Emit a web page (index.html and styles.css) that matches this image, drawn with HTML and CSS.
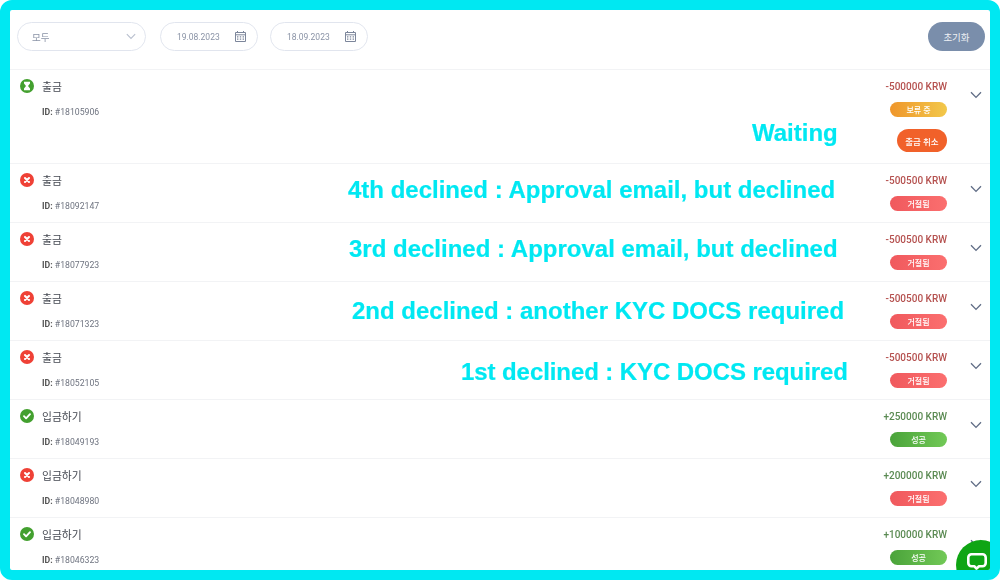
FILE: index.html
```html
<!DOCTYPE html>
<html lang="ko">
<head>
<meta charset="utf-8">
<title>거래 내역</title>
<link rel="stylesheet" href="styles.css">
</head>
<body>
<svg class="sprites" width="0" height="0" aria-hidden="true">
  <symbol id="i-chev" viewBox="0 0 12 8"><path d="M1 1.2 6 6.4l5-5.2" fill="none" stroke="currentColor" stroke-width="1.3"/></symbol>
  <symbol id="i-cal" viewBox="0 0 11 11"><path d="M2.5 0v2M8.5 0v2" stroke="currentColor" fill="none"/><path d="M.5 1.5h10v9H.5zM.5 3.8h10" stroke="currentColor" fill="none"/><path d="M2 5.2h1.4v1.2H2zM4.8 5.2h1.4v1.2H4.8zM7.6 5.2H9v1.2H7.6zM2 7.6h1.4v1.2H2zM4.8 7.6h1.4v1.2H4.8zM7.6 7.6H9v1.2H7.6z" fill="currentColor"/></symbol>
  <symbol id="i-x" viewBox="0 0 14 14"><circle cx="7" cy="7" r="7" fill="#ef4136"/><path d="M5 5l4 4M9 5l-4 4" stroke="#fff" stroke-width="2.1" stroke-linecap="round"/></symbol>
  <symbol id="i-ok" viewBox="0 0 14 14"><circle cx="7" cy="7" r="7" fill="#43a02f"/><path d="M4 7.2l2.1 2.1L10 5.2" fill="none" stroke="#fff" stroke-width="1.9" stroke-linecap="round" stroke-linejoin="round"/></symbol>
  <symbol id="i-wait" viewBox="0 0 14 14"><circle cx="7" cy="7" r="7" fill="#43a02f"/><path d="M4 2.8h6v1.7L8 7l2 2.5v1.7H4V9.5L6 7 4 4.5z" fill="#fff"/></symbol>
</svg>
<main class="frame">
  <div class="toolbar">
    <div class="field field-select"><span>모두</span><svg class="field-chev"><use href="#i-chev"/></svg></div>
    <div class="field field-date"><span>19.08.2023</span><svg class="cal"><use href="#i-cal"/></svg></div>
    <div class="field field-date"><span>18.09.2023</span><svg class="cal"><use href="#i-cal"/></svg></div>
    <button class="reset">초기화</button>
  </div>

  <ul class="list">
    <li class="row">
      <div class="info">
        <div class="title"><svg class="status"><use href="#i-wait"/></svg>출금</div>
        <div class="id"><b>ID:</b> #18105906</div>
      </div>
      <div class="money">
        <div class="amount minus">-500000 KRW</div>
        <div class="badge pending">보류 중</div>
        <button class="cancel">출금 취소</button>
      </div>
      <svg class="chev"><use href="#i-chev"/></svg>
    </li>
    <li class="row">
      <div class="info">
        <div class="title"><svg class="status"><use href="#i-x"/></svg>출금</div>
        <div class="id"><b>ID:</b> #18092147</div>
      </div>
      <div class="money">
        <div class="amount minus">-500500 KRW</div>
        <div class="badge declined">거절됨</div>
      </div>
      <svg class="chev"><use href="#i-chev"/></svg>
    </li>
    <li class="row">
      <div class="info">
        <div class="title"><svg class="status"><use href="#i-x"/></svg>출금</div>
        <div class="id"><b>ID:</b> #18077923</div>
      </div>
      <div class="money">
        <div class="amount minus">-500500 KRW</div>
        <div class="badge declined">거절됨</div>
      </div>
      <svg class="chev"><use href="#i-chev"/></svg>
    </li>
    <li class="row">
      <div class="info">
        <div class="title"><svg class="status"><use href="#i-x"/></svg>출금</div>
        <div class="id"><b>ID:</b> #18071323</div>
      </div>
      <div class="money">
        <div class="amount minus">-500500 KRW</div>
        <div class="badge declined">거절됨</div>
      </div>
      <svg class="chev"><use href="#i-chev"/></svg>
    </li>
    <li class="row">
      <div class="info">
        <div class="title"><svg class="status"><use href="#i-x"/></svg>출금</div>
        <div class="id"><b>ID:</b> #18052105</div>
      </div>
      <div class="money">
        <div class="amount minus">-500500 KRW</div>
        <div class="badge declined">거절됨</div>
      </div>
      <svg class="chev"><use href="#i-chev"/></svg>
    </li>
    <li class="row">
      <div class="info">
        <div class="title"><svg class="status"><use href="#i-ok"/></svg>입금하기</div>
        <div class="id"><b>ID:</b> #18049193</div>
      </div>
      <div class="money">
        <div class="amount plus">+250000 KRW</div>
        <div class="badge success">성공</div>
      </div>
      <svg class="chev"><use href="#i-chev"/></svg>
    </li>
    <li class="row">
      <div class="info">
        <div class="title"><svg class="status"><use href="#i-x"/></svg>입금하기</div>
        <div class="id"><b>ID:</b> #18048980</div>
      </div>
      <div class="money">
        <div class="amount plus">+200000 KRW</div>
        <div class="badge declined">거절됨</div>
      </div>
      <svg class="chev"><use href="#i-chev"/></svg>
    </li>
    <li class="row">
      <div class="info">
        <div class="title"><svg class="status"><use href="#i-ok"/></svg>입금하기</div>
        <div class="id"><b>ID:</b> #18046323</div>
      </div>
      <div class="money">
        <div class="amount plus">+100000 KRW</div>
        <div class="badge success">성공</div>
      </div>
      <svg class="chev"><use href="#i-chev"/></svg>
    </li>
  </ul>

  <p class="note note-wait">Waiting</p>
  <p class="note note-4">4th declined : Approval email, but declined</p>
  <p class="note note-3">3rd declined : Approval email, but declined</p>
  <p class="note note-2">2nd declined : another KYC DOCS required</p>
  <p class="note note-1">1st declined : KYC DOCS required</p>

  <div class="chat">
    <svg viewBox="0 0 20 17" class="chat-icon"><path d="M4.5 1.3h11a3.2 3.2 0 0 1 3.2 3.2v5.5a3.2 3.2 0 0 1-3.2 3.2H12L9.5 15.6 7.2 13.2H4.5A3.2 3.2 0 0 1 1.3 10V4.5a3.2 3.2 0 0 1 3.2-3.2z" fill="none" stroke="#fff" stroke-width="2.6" stroke-linejoin="round"/></svg>
  </div>
</main>
</body>
</html>
```

FILE: styles.css
```css
* { box-sizing: border-box; }
html, body { margin: 0; padding: 0; background: #fff; }
body { width: 1000px; height: 580px; overflow: hidden; font-family: Roboto, "Noto Sans CJK KR", sans-serif; }
.sprites { position: absolute; }

.frame {
  position: relative;
  width: 1000px;
  height: 580px;
  border: 10px solid #00e8f2;
  border-radius: 12px;
  background: #fff;
  overflow: hidden;
}

.toolbar {
  display: flex;
  align-items: flex-start;
  height: 59px;
  padding: 12px 5px 0 7px;
  font-size: 8.5px;
  color: #8a93a6;
  filter: blur(0.25px);
}
.field {
  display: flex;
  align-items: center;
  height: 29px;
  border: 1px solid #e1e5ee;
  border-radius: 15px;
}
.field-select { width: 129px; justify-content: space-between; padding: 0 9px 0 14px; margin-right: 14px; font-size: 9.5px; }
.field-chev { width: 10px; height: 7px; color: #b8bfce; }
.field-date { width: 97.5px; padding: 0 11px 0 16px; justify-content: space-between; margin-right: 12.5px; }
.cal { width: 11px; height: 11px; color: #7c869b; }
.reset {
  margin-left: auto;
  width: 57px;
  height: 29px;
  border: 0;
  border-radius: 15px;
  background: #7a8eab;
  color: #eef1f5;
  font: inherit;
  font-size: 9.5px;
  padding: 0;
}

.list { margin: 0; padding: 0; list-style: none; filter: blur(0.25px); }
.row {
  display: flex;
  align-items: flex-start;
  height: 59px;
  border-top: 1px solid #f2f3f5;
  padding: 8px 0 0 10px;
}
.row:first-child { height: 94px; }
.info { flex: 1; }
.title {
  display: flex;
  align-items: center;
  height: 16px;
  font-size: 10.8px;
  color: #444851;
}
.status { width: 14px; height: 14px; margin: -1px 8px 0 0; }
.id { margin: 12px 0 0 22px; font-size: 8.7px; line-height: 12px; color: #6f7480; }
.id b { font-weight: 700; color: #555; }

.money { display: flex; flex-direction: column; align-items: flex-end; margin-top: 1px; }
.amount { font-size: 10px; font-weight: 500; line-height: 16px; }
.minus { color: #b5514f; }
.plus { color: #5a8a52; }
.badge {
  display: flex;
  align-items: center;
  justify-content: center;
  width: 57px;
  height: 15px;
  margin-top: 7px;
  border-radius: 8px;
  color: #fff;
  font-size: 8px;
  font-weight: 500;
}
.pending { background: linear-gradient(90deg, #ef962b, #f2c84b); }
.declined { background: linear-gradient(90deg, #f0595d, #fb6f6f); }
.success { background: linear-gradient(90deg, #4aa33a, #72c957); }
.cancel {
  width: 50px;
  height: 23px;
  margin-top: 12px;
  padding: 0;
  border: 0;
  border-radius: 12px;
  background: #f1612a;
  color: #fff;
  font: 500 8.5px Roboto, "Noto Sans CJK KR", sans-serif;
}
.chev { width: 12px; height: 8px; margin: 13px 8px 0 23px; color: #5f6c85; }

.note {
  position: absolute;
  margin: 0;
  font: 700 24px/28px "Liberation Sans", Arial, sans-serif;
  color: #00e8f2;
  white-space: nowrap;
  -webkit-text-stroke: 0.2px #00e8f2;
}
.note-wait { left: 742px; top: 109px; }
.note-4 { left: 338px; top: 166px; }
.note-3 { left: 339px; top: 225px; }
.note-2 { left: 342px; top: 287px; }
.note-1 { left: 451px; top: 348px; letter-spacing: -0.08px; }

.chat {
  position: absolute;
  left: 946px;
  top: 530px;
  width: 50px;
  height: 50px;
  border-radius: 50%;
  background: #0fa514;
}
.chat-icon { display: block; width: 20px; height: 17px; margin: 13px 0 0 11px; }
```
